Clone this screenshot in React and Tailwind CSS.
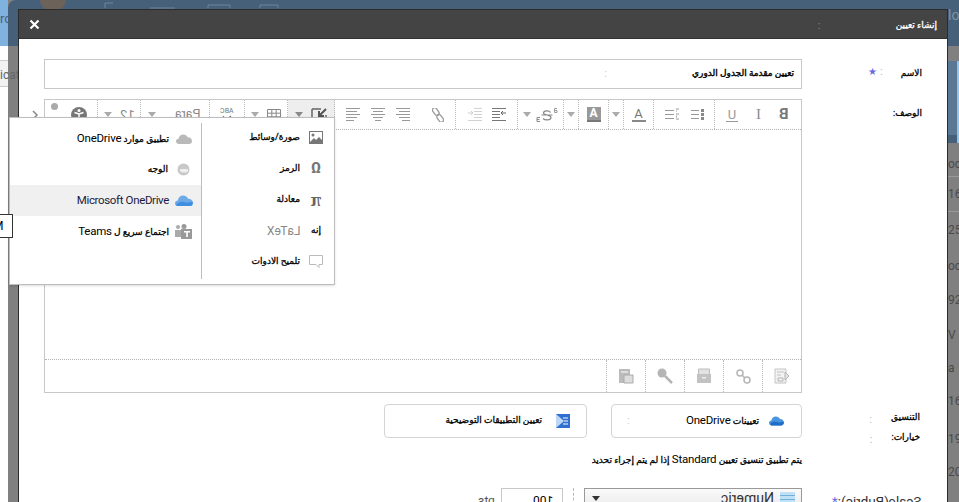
const Ico = ({ w = 16, h = 16, className = "", children }) => (
  <svg width={w} height={h} viewBox={`0 0 ${w} ${h}`} className={`shrink-0 ${className}`}>
    {children}
  </svg>
);

// arabic text runs wide in DejaVu, so it gets a smaller size and a thin stroke for the weight
const Ar = ({ className = "", children }) => (
  <span dir="rtl" className={`whitespace-nowrap text-[9px] [-webkit-text-stroke-width:0.3px] ${className}`}>
    {children}
  </span>
);

const L = ({ children }) => (
  <span className="text-[11.5px] tracking-[-0.2px] [-webkit-text-stroke-width:0px]">{children}</span>
);

// ---------------- TOOLBAR ICONS ----------------
const Caret = ({ color = "#aaa" }) => (
  <Ico w={8} h={5}>
    <path d="M0 0h8L4 5z" fill={color} />
  </Ico>
);

const Lines = ({ rows, color = "#999" }) => (
  <Ico w={14} h={13}>
    {rows.map(([x, w], i) => (
      <rect key={i} x={x} y={i * 3} width={w} height="1" fill={color} />
    ))}
  </Ico>
);

const Cloud = ({ color = "#b5b5b5", color2, w = 16 }) => (
  <svg width={w} height={(w * 10) / 16} viewBox="0 0 16 10" className="shrink-0">
    <path d="M3 10C1 10 0 8.700 0 7.300C0 5.800 1.100 4.800 2.500 4.800C3 2 5 .5 7.300 .5C9.300 .5 11 1.700 11.700 3.300C14.200 3.300 16 5 16 7C16 8.800 14.800 10 13 10Z" fill={color} />
    {color2 && <path d="M1 9C2 6.500 6 5 9 6.500C11 7.500 13 6 15.600 6C16.200 8 14.800 10 13 10H3C2 10 1.400 9.600 1 9Z" fill={color2} />}
  </svg>
);

const Cell = ({ w, bg = "", children }) => (
  <div className={`flex shrink-0 items-center justify-center gap-2 border-r border-dotted border-[#b9b9b9] ${bg}`} style={{ width: w }}>
    {children}
  </div>
);

function Toolbar() {
  return (
    <div className="flex h-[30px] border-b border-dotted border-[#b4b4b4]">
      <Cell w={53}>
        <div className="flex w-full items-start justify-between pl-[6px] pr-[10px]">
          <div className="mt-[-4px] h-[7px] w-[7px] rounded-full bg-[#aaa]" />
          <Ico w={16} h={16}>
            <circle cx="8" cy="8" r="8" fill="#777" />
            <circle cx="8" cy="3.500" r="1.500" fill="#fff" />
            <path d="M3.500 5.500L8 7l4.500-1.500M8 7v7" stroke="#fff" fill="none" strokeWidth="1.500" />
          </Ico>
        </div>
      </Cell>
      <Cell w={43}>
        <Caret />
        <span className="inline-block -scale-x-100 text-[13px] text-[#888]">12</span>
      </Cell>
      <Cell w={69}>
        <div className="flex w-full items-center justify-between pl-[7px] pr-[9px]">
          <Caret />
          <span className="inline-block -scale-x-100 text-[12.5px] text-[#888]">Para</span>
        </div>
      </Cell>
      <Cell w={35}>
        <div className="flex flex-col items-center leading-none">
          <span className="inline-block -scale-x-100 text-[7px] text-[#777]">ABC</span>
          <Ico w={10} h={6}>
            <path d="M1 1l3 4M4 5l5-4" stroke="#777" fill="none" strokeWidth="1.200" />
          </Ico>
        </div>
      </Cell>
      <Cell w={43}>
        <Caret />
        <Ico w={14} h={12}>
          <path d="M.5.500h13v11H.5zM.5 4.200h13M.5 7.800h13M4.800.500v11M9.200.500v11" fill="none" stroke="#888" />
        </Ico>
      </Cell>
      <Cell w={47} bg="bg-[#eeeeee]">
        <Caret color="#888" />
        <Ico w={16} h={14}>
          <path d="M1 1h9M1 1v12h14V7" fill="none" stroke="#666" strokeWidth="1.500" />
          <path d="M15 1L8 8M8 3v5h5" fill="none" stroke="#555" strokeWidth="2" />
        </Ico>
      </Cell>
      <Cell w={121}>
        <div className="flex w-full items-center justify-between pl-[11px] pr-[11px]">
          <div className="flex items-center gap-[11px]">
            <Lines rows={[[0, 14], [0, 11], [0, 14], [0, 11], [0, 8]]} />
            <Lines rows={[[0, 14], [2, 10], [0, 14], [2, 10], [4, 6]]} />
            <Lines rows={[[0, 14], [3, 11], [0, 14], [3, 11], [6, 8]]} />
          </div>
          <Ico w={12} h={14}>
            <rect x="1.500" y="-.5" width="4.500" height="8" rx="2" transform="rotate(-35 3.700 3.500)" fill="none" stroke="#999" strokeWidth="1.300" />
            <rect x="6" y="6.500" width="4.500" height="8" rx="2" transform="rotate(-35 8.200 10.500)" fill="none" stroke="#999" strokeWidth="1.300" />
          </Ico>
        </div>
      </Cell>
      <Cell w={62}>
        <div className="flex items-center gap-[10px]">
          <Ico w={14} h={13}>
            <path d="M6 .5h8M6 3.500h8M6 6.500h8M6 9.500h8M0 12.500h14" stroke="#d2d2d2" />
            <path d="M0 5h4M3 3l2 2-2 2" stroke="#cfcfcf" fill="none" />
          </Ico>
          <Ico w={14} h={13}>
            <path d="M0 .5h14M0 3.500h8M0 6.500h8M0 9.500h8M0 12.500h14" stroke="#777" />
            <path d="M14 5h-4M11 3L9 5l2 2" stroke="#666" fill="none" />
          </Ico>
        </div>
      </Cell>
      <Cell w={46}>
        <Caret />
        <Ico w={22} h={14} className="ml-[-3px]">
          <path d="M1 9.500h3M1 11.500h2.500M1 13.500h3M1 9.500v4" stroke="#888" fill="none" />
          <path d="M14.500 4.500C13 2 7.500 2.500 7.500 5C7.500 7.500 15 6.500 15 9.500C15 12.500 9 12.500 7 10.500M5.500 7h11" stroke="#888" fill="none" strokeWidth="1.200" />
          <path d="M21 .5h-2.500v4H21V2.500h-2.500" stroke="#999" fill="none" />
        </Ico>
      </Cell>
      <Cell w={15}>
        <Caret />
      </Cell>
      <Cell w={30}>
        <div className="flex w-[14px] flex-col items-center border-b-2 border-[#777] bg-[#999]">
          <span className="text-[12px] font-bold leading-[13px] text-white">A</span>
        </div>
      </Cell>
      <Cell w={15}>
        <Caret />
      </Cell>
      <Cell w={30}>
        <div className="flex w-[14px] flex-col items-center border-b-2 border-[#888]">
          <span className="text-[13px] leading-[13px] text-[#777]">A</span>
        </div>
      </Cell>
      <Cell w={61}>
        <div className="flex items-center gap-[12px]">
          <Ico w={14} h={13}>
            <path d="M0 2.500h9M0 6.500h9M0 10.500h9M11 1h3M11 3h1M11 6h3M11 8h1M11 11h3M11 9h1" stroke="#999" />
          </Ico>
          <Ico w={13} h={13}>
            <path d="M0 2.500h8M0 6.500h8M0 10.500h8" stroke="#999" />
            <path d="M10 1h3v3h-3zM10 5h3v3h-3zM10 9h3v3h-3z" fill="#888" />
          </Ico>
        </div>
      </Cell>
      <div className="flex flex-1 items-center justify-between pl-[11px] pr-[12px]">
        <div className="flex w-[12px] flex-col items-center border-b border-[#999]">
          <span className="text-[13px] leading-[13px] text-[#999]">U</span>
        </div>
        <span className="inline-block -scale-x-100 font-['Liberation_Serif',serif] text-[15px] leading-none text-[#888]">I</span>
        <span className="inline-block -scale-x-100 text-[15px] font-bold leading-none text-[#777]">B</span>
      </div>
    </div>
  );
}

function BottomBar() {
  const cell = "flex w-[39px] items-center justify-center border-l border-dotted border-[#b9b9b9]";
  return (
    <div className="flex h-[33px] justify-end border-t border-dotted border-[#b4b4b4]">
      <div className={cell}>
        <Ico w={16} h={16}>
          <path d="M1 1h11v14H1z" fill="#bbb" />
          <path d="M6 7h9v8H6z" fill="#ddd" stroke="#aaa" />
          <path d="M3 3h7v2H3z" fill="#ddd" />
        </Ico>
      </div>
      <div className={cell}>
        <Ico w={16} h={16}>
          <circle cx="5" cy="5" r="4.500" fill="#b5b5b5" />
          <path d="M8 8l7 7" stroke="#b5b5b5" strokeWidth="2.500" />
        </Ico>
      </div>
      <div className={cell}>
        <Ico w={14} h={16}>
          <path d="M1.500 1h11v6h-11z" fill="#e2e2e2" stroke="#bbb" />
          <path d="M0 6h14v9H0z" fill="#c2c2c2" />
          <path d="M5 9h4v1.500H5z" fill="#eee" />
        </Ico>
      </div>
      <div className={cell}>
        <Ico w={15} h={15}>
          <circle cx="4" cy="4" r="3" fill="none" stroke="#b5b5b5" strokeWidth="1.500" />
          <circle cx="11" cy="11" r="3" fill="none" stroke="#b5b5b5" strokeWidth="1.500" />
          <path d="M6 6l3 3" stroke="#b5b5b5" strokeWidth="1.500" />
        </Ico>
      </div>
      <div className={cell}>
        <Ico w={16} h={16}>
          <path d="M1 1h11v14H1z" fill="#f2f2f2" stroke="#c4c4c4" />
          <path d="M3 4h7M3 7h4" stroke="#c4c4c4" />
          <path d="M4 10h5v3H4z" fill="none" stroke="#b5b5b5" />
          <path d="M11 4l4 4-4 4z" fill="#e4e4e4" stroke="#b5b5b5" />
        </Ico>
      </div>
    </div>
  );
}

// ---------------- INSERT MENU ----------------
const menuRow = "flex h-[31px] items-center justify-end";

function InsertMenu() {
  return (
    <div className="absolute left-[9px] top-[117px] z-20 flex h-[168px] w-[326px] border border-[#bdbdbd] bg-white shadow-sm">
      <div className="flex w-[191px] flex-col pt-[5px]">
        <div className={`${menuRow} gap-[7px] pr-[9px]`}>
          <Ar>تطبيق موارد <L>OneDrive</L></Ar>
          <Cloud color="#b9b9b9" w={16} />
        </div>
        <div className={`${menuRow} gap-[9px] pr-[11px]`}>
          <Ar>الوجه</Ar>
          <Ico w={13} h={13}>
            <circle cx="6.500" cy="6.500" r="6" fill="#c8c8c8" />
            <path d="M3 6h8v2c-1 2-7 2-8 0z" fill="#eee" />
          </Ico>
        </div>
        <div className={`${menuRow} gap-[6px] bg-[#f0f0f0] pr-[8px]`}>
          <span className="text-[11.5px] tracking-[-0.35px] text-[#1d1a3a]">Microsoft OneDrive</span>
          <Cloud color="#6ea9e8" color2="#3f8fe0" w={18} />
        </div>
        <div className={`${menuRow} gap-[5px] pr-[9px]`}>
          <Ar>اجتماع سريع ل <L>Teams</L></Ar>
          <Ico w={18} h={15}>
            <circle cx="4" cy="3" r="2" fill="#aaa" />
            <path d="M1 6h6v7H1z" fill="#aaa" />
            <circle cx="10" cy="2.500" r="2.500" fill="#999" />
            <path d="M7 5h11v10H7z" fill="#999" />
            <path d="M10 7h6v1.500h-2.200V13h-1.600V8.500H10z" fill="#fff" />
          </Ico>
        </div>
      </div>
      <div className="my-[5px] w-px bg-[#bdbdbd]" />
      <div className="flex flex-1 flex-col pt-[4px]">
        <div className={`${menuRow} gap-[9px] pr-[11px]`}>
          <Ar>صورة/وسائط</Ar>
          <Ico w={14} h={13}>
            <path d="M0 0h14v13H0z" fill="#777" />
            <path d="M1 1h12v8l-3-3-3 3-2-2-4 4z" fill="#fff" />
            <circle cx="4" cy="4" r="1.500" fill="#777" />
          </Ico>
        </div>
        <div className={`${menuRow} gap-[9px] pr-[11px]`}>
          <Ar>الرمز</Ar>
          <span className="w-[14px] text-center text-[15px] font-bold leading-none text-[#777]">Ω</span>
        </div>
        <div className={`${menuRow} gap-[9px] pr-[11px]`}>
          <Ar>معادلة</Ar>
          <span className="w-[14px] -scale-x-100 text-center font-['Liberation_Serif',serif] text-[19px] font-bold leading-none text-[#666]">π</span>
        </div>
        <div className={`${menuRow} gap-[9px] pr-[11px]`}>
          <span className="inline-block -scale-x-100 text-[12px] text-[#888]">LaTeX</span>
          <Ar className="w-[14px] text-center">إنه</Ar>
        </div>
        <div className={`${menuRow} gap-[9px] pr-[11px]`}>
          <Ar>تلميح الادوات</Ar>
          <Ico w={14} h={13}>
            <path d="M.5.500h13v9H7L4 12.500V9.500H.5z" transform="matrix(-1 0 0 1 14 0)" fill="none" stroke="#bbb" />
          </Ico>
        </div>
      </div>
    </div>
  );
}

// ---------------- PAGE BEHIND THE DIALOG ----------------
function Behind() {
  const rows = [
    ["h-[25px]", "oc"],
    ["h-[35px] border-t border-[#9a9a9a]", "16"],
    ["h-[36px] border-t border-[#9a9a9a]", "25"],
    ["h-[38px]", "oc"],
    ["h-[30px]", "92"],
    ["h-[40px]", "V"],
    ["h-[26px]", "a"],
    ["h-[40px]", "16"],
    ["h-[36px]", "19"],
    ["h-[30px]", "20"],
  ];
  return (
    <div className="flex h-full">
      <div className="flex w-[8px] shrink-0 flex-col">
        <div className="h-[46px] bg-[#80b2df]" />
        <div className="mt-[14px] h-[27px] w-[8px] border-y border-[#ccc] bg-[#f2f2f2]" />
      </div>
      <div className="flex flex-1 flex-col bg-[#808080]">
        <div className="flex h-[46px] rounded-tl-lg bg-[#46607a]">
          <div className="ml-auto w-[11px] pt-[8px] text-[14px] leading-none text-[#7f93a6]">lo</div>
        </div>
        <div className="ml-auto mt-[15px] flex h-[82px] w-[11px] flex-col border-r-2 border-[#8fc5ea] bg-[#4e6a84]">
          <div className="flex-1 bg-[#5a7893]" />
          <div className="h-[8px] bg-[#46607a]" />
        </div>
        <div className="ml-auto mt-[8px] flex w-[11px] flex-col overflow-hidden text-[12px] text-[#4a4a4a]">
          {rows.map(([h, t], i) => (
            <div key={i} className={`flex items-center whitespace-nowrap ${h}`}>
              <span className="inline-block">{t}</span>
            </div>
          ))}
        </div>
      </div>
    </div>
  );
}

export default function App() {
  return (
    <div className="relative h-[502px] w-[959px] overflow-hidden bg-white font-['Roboto','DejaVu_Sans',sans-serif] text-[11.5px] text-black">
      <Behind />

      {/* scraps of the page that stick out above the dialog */}
      <span className="absolute left-0 top-[9px] text-[13px] text-[#4a5f75]">ro</span>
      <span className="absolute left-0 top-[66px] text-[12px] text-[#666]">icat</span>
      <div className="absolute left-[40px] top-0 h-[10px] w-[26px] rounded-b-full bg-[#6d6259]" />
      <Ico w={200} h={9} className="absolute left-[100px] top-0">
        <path d="M5 8V3h8M50 8h25M108 8V5h22v3M160 8V5h18v3" fill="none" stroke="#6f8499" />
      </Ico>

      {/* dialog */}
      <div className="absolute left-[18px] top-[9px] z-10 flex h-[500px] w-[930px] flex-col border-x border-t border-[#2b2b2b] bg-white">
        <div className="flex h-[29px] shrink-0 items-center justify-between border-b border-[#333] bg-[#444444] pl-[10px] pr-[10px] text-white">
          <Ico w={11} h={11}>
            <path d="M1.500 1.500l8 8M9.500 1.500l-8 8" stroke="#fff" strokeWidth="2.200" />
          </Ico>
          <div className="flex items-center gap-[75px] pt-[3px]">
            <span className="text-[#888]">:</span>
            <Ar>إنشاء تعيين</Ar>
          </div>
        </div>

        <div className="flex flex-col pl-[25px] pt-[20px]">
          {/* name */}
          <div className="flex">
            <div className="flex h-[30px] w-[758px] items-center justify-end border border-[#c8c8c8] pr-[7px]">
              <span className="mr-[85px] text-[#ccc]">:</span>
              <Ar className="[-webkit-text-stroke-width:0.4px]">تعيين مقدمة الجدول الدوري</Ar>
            </div>
            <div className="flex flex-1 items-center justify-end pb-[4px] pr-[25px]">
              <span className="text-[10px] leading-none text-[#6b6be0]">★</span>
              <span className="ml-[3px] text-[#bbb]">:</span>
              <Ar className="ml-[18px] mt-[4px]">الاسم</Ar>
            </div>
          </div>

          {/* description */}
          <div className="mt-[10px] flex">
            <div className="flex h-[294px] w-[758px] flex-col border border-[#c8c8c8]">
              <Toolbar />
              <div className="flex-1" />
              <BottomBar />
            </div>
            <div className="flex flex-1 justify-end pr-[25px] pt-[8px]">
              <Ar>الوصف:</Ar>
            </div>
          </div>

          {/* options */}
          <div className="mt-[11px] flex">
            <div className="flex w-[758px] flex-col">
              <div className="flex justify-end gap-[24px]">
                <div className="flex h-[34px] w-[203px] items-center justify-end gap-[14px] rounded-sm border border-[#d4d4d4] pr-[16px]">
                  <Ar>تعيين التطبيقات التوضيحية</Ar>
                  <Ico w={14} h={14}>
                    <path d="M0 0h14v14H0z" fill="#2f6fd0" />
                    <path d="M0 0l8 7-8 7z" fill="#bcd7f5" />
                    <path d="M7 4h5M8 7h4M7 10h5" stroke="#fff" />
                  </Ico>
                </div>
                <div className="flex h-[34px] w-[191px] items-center rounded-sm border border-[#d4d4d4] pr-[17px]">
                  <span className="ml-[15px] text-[#ccc]">:</span>
                  <div className="ml-auto flex items-center gap-[10px]">
                    <Ar>تعيينات <L>OneDrive</L></Ar>
                    <Cloud color="#4a94e0" color2="#1f6fc8" w={15} />
                  </div>
                </div>
              </div>
              <p dir="rtl" className="mt-[13px] text-[9px] [-webkit-text-stroke-width:0.3px]">
                يتم تطبيق تنسيق تعيين <L>Standard</L> إذا لم يتم إجراء تحديد
              </p>
            </div>
            <div className="flex flex-1 flex-col items-end pr-[27px]">
              <div className="mt-[7px] flex gap-[19px]">
                <span className="text-[#bbb]">:</span>
                <Ar>التنسيق</Ar>
              </div>
              <div className="mt-[3px] flex gap-[19px]">
                <span className="text-[#bbb]">:</span>
                <Ar>خيارات:</Ar>
              </div>
            </div>
          </div>

          {/* scale */}
          <div className="mt-[20px] flex">
            <div className="flex w-[758px] items-start justify-end">
              <span className="mr-[6px] mt-[4px] inline-block -scale-x-100 text-[12px] text-[#555]">pts</span>
              <div className="flex h-[30px] w-[62px] justify-end border border-[#c8c8c8] pr-[9px] pt-[3px] text-[12px]">
                <span className="inline-block -scale-x-100">100</span>
              </div>
              <div className="mx-[10px] h-[22px] border-l border-dashed border-[#bbb]" />
              <div className="flex h-[30px] w-[218px] items-center justify-between border border-[#999] bg-gradient-to-b from-[#fafafa] to-[#e4e4e4] pb-[10px] pl-[7px] pr-[6px]">
                <Caret color="#333" />
                <div className="flex items-center gap-[6px]">
                  <span className="inline-block -scale-x-100 text-[14px] text-[#333]">Numeric</span>
                  <Ico w={15} h={12}>
                    <path d="M0 0h15v12H0z" fill="#bfe0f5" />
                    <path d="M0 3.500h15M0 7.500h15" stroke="#6fb1dc" />
                  </Ico>
                </div>
              </div>
            </div>
            <div className="flex flex-1 justify-end pr-[25px] pt-[3px]">
              <span className="inline-block -scale-x-100 text-[13.5px] text-[#333]">
                Scale(Rubric):<span className="text-[#6b6be0]">*</span>
              </span>
            </div>
          </div>
        </div>
      </div>

      {/* chevron next to toolbar */}
      <Ico w={7} h={10} className="absolute left-[32px] top-[110px] z-10">
        <path d="M1 1l4 4-4 4" fill="none" stroke="#888" strokeWidth="1.500" />
      </Ico>

      <InsertMenu />

      {/* tooltip poking in from the edge */}
      <div className="absolute left-[-6px] top-[214px] z-30 flex h-[24px] w-[19px] items-center justify-start border border-[#333] bg-white text-[12px]">
        <span className="ml-[-2px]">M</span>
      </div>
    </div>
  );
}
